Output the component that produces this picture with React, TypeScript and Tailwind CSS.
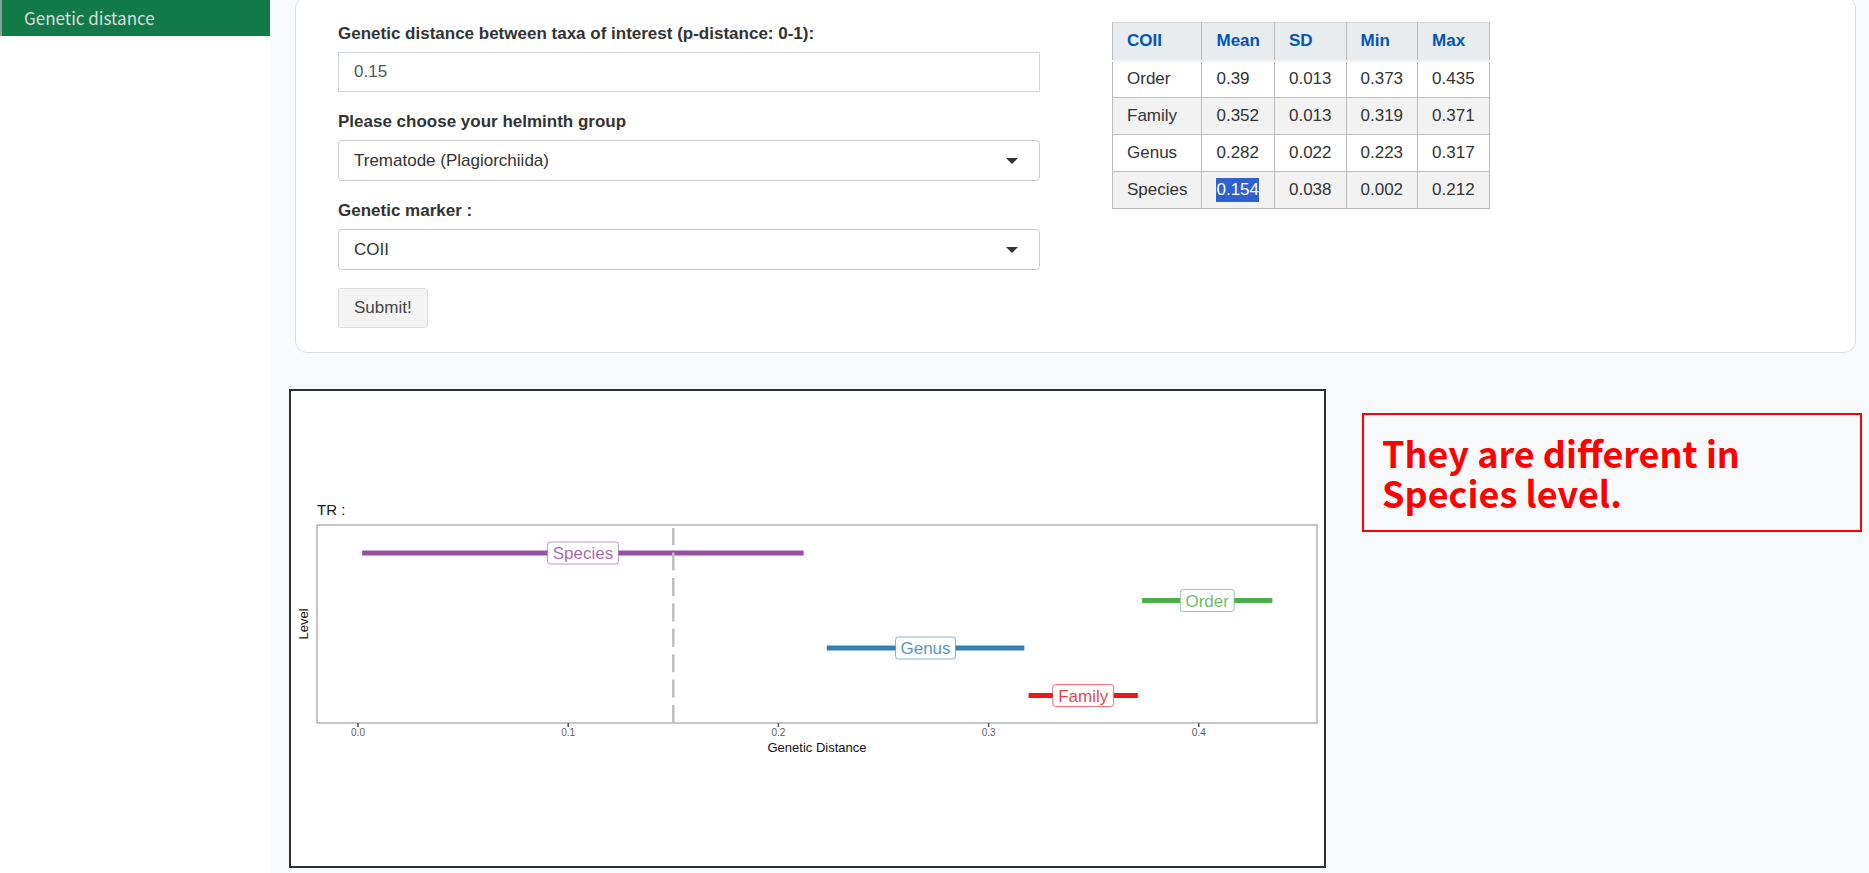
import React from "react";

const columns = ["COII", "Mean", "SD", "Min", "Max"];

const rows = [
  ["Order", "0.39", "0.013", "0.373", "0.435"],
  ["Family", "0.352", "0.013", "0.319", "0.371"],
  ["Genus", "0.282", "0.022", "0.223", "0.317"],
  ["Species", "0.154", "0.038", "0.002", "0.212"],
];

const ranges = [
  { name: "Species", min: 0.002, max: 0.212, y: 162, width: 71, color: "#984ea3" },
  { name: "Order", min: 0.373, max: 0.435, y: 209.5, width: 54, color: "#4daf4a" },
  { name: "Genus", min: 0.223, max: 0.317, y: 257, width: 60, color: "#377eb8" },
  { name: "Family", min: 0.319, max: 0.371, y: 304.5, width: 61, color: "#e41a1c" },
];

const ticks = [0, 0.1, 0.2, 0.3, 0.4];

const toX = (distance: number) => 67 + distance * 2102;

function Chart() {
  return (
    <svg
      viewBox="0 0 1033 475"
      className="block h-auto w-full font-['Liberation_Sans',Arial,sans-serif]"
      role="img"
      aria-label="Genetic distance range by level"
    >
      <text x="26" y="124" fontSize="15" fill="#1a1a1a">TR :</text>
      {ranges.map((r) => (
        <line key={r.name} x1={toX(r.min)} x2={toX(r.max)} y1={r.y} y2={r.y} stroke={r.color} strokeWidth="5" />
      ))}
      {ranges.map((r) => {
        const mid = toX((r.min + r.max) / 2);
        return (
          <g key={r.name}>
            <rect x={mid - r.width / 2} y={r.y - 11} width={r.width} height="22" rx="3" fill="#fff" stroke={r.color} strokeOpacity="0.6" />
            <text x={mid} y={r.y + 6} fontSize="17" textAnchor="middle" fill={r.color} fillOpacity="0.85">{r.name}</text>
          </g>
        );
      })}
      <line x1={toX(0.15)} x2={toX(0.15)} y1="332" y2="137" stroke="#bebebe" strokeWidth="2.5" strokeDasharray="18 7.4" />
      <rect x="26" y="134" width="1000" height="198" fill="none" stroke="#b3b3b3" strokeWidth="1.5" />
      {ticks.map((t) => (
        <g key={t}>
          <line x1={toX(t)} x2={toX(t)} y1="332" y2="336" stroke="#555" strokeWidth="1.5" />
          <text x={toX(t)} y="345" fontSize="10" textAnchor="middle" fill="#5c5c5c">{t.toFixed(1)}</text>
        </g>
      ))}
      <text x="526" y="361" fontSize="13" textAnchor="middle" fill="#111">Genetic Distance</text>
      <text transform="translate(17 233) rotate(-90)" fontSize="13" textAnchor="middle" fill="#111">Level</text>
    </svg>
  );
}

function SelectField({ id, label, value }: { id: string; label: string; value: string }) {
  return (
    <div>
      <label htmlFor={id} className="mb-1.5 block font-bold leading-6">{label}</label>
      <div className="grid items-center">
        <select
          id={id}
          defaultValue={value}
          className="col-start-1 row-start-1 h-[41px] w-full appearance-none rounded-[4px] border border-[#ccc] bg-white px-[15px]"
        >
          <option>{value}</option>
        </select>
        <svg viewBox="0 0 12 6" className="pointer-events-none col-start-1 row-start-1 mr-[22px] h-1.5 w-3 justify-self-end" aria-hidden="true">
          <path d="M0 0h12L6 6z" fill="#333" />
        </svg>
      </div>
    </div>
  );
}

export default function App() {
  return (
    <div className="flex min-h-screen bg-[#f8f9fb] font-['Liberation_Sans',Arial,sans-serif] text-[17px] text-[#333]">
      <nav className="w-[271px] shrink-0 bg-white pr-px">
        <a
          href="#genetic-distance"
          className="block h-9 border-l-2 border-[#999] bg-[#127a48] pl-[22px] font-['Noto_Sans_CJK_SC',sans-serif] text-[17px] leading-9 text-[#d8dedb]"
        >
          Genetic distance
        </a>
      </nav>
      <main className="min-w-0 flex-1 overflow-hidden pl-[18px] pr-[7px]">
        <section className="-mt-1 ml-1.5 mr-1.5 flex gap-[72px] rounded-xl border border-[#dcdfe2] bg-white pb-6 pl-[42px] pr-10 pt-[25px]">
          <form className="flex w-[702px] flex-col gap-[18px]" onSubmit={(e) => e.preventDefault()}>
            <div>
              <label htmlFor="distance" className="mb-1.5 block font-bold leading-6">
                Genetic distance between taxa of interest (p-distance: 0-1):
              </label>
              <input
                id="distance"
                type="text"
                defaultValue="0.15"
                className="block h-10 w-full border border-[#d0d4dd] bg-white px-[15px] text-[#555]"
              />
            </div>
            <SelectField id="group" label="Please choose your helminth group" value="Trematode (Plagiorchiida)" />
            <SelectField id="marker" label="Genetic marker :" value="COII" />
            <button type="submit" className="h-10 self-start rounded-[3px] border border-[#ddd] bg-[#f4f4f4] px-[15px] text-[#444]">
              Submit!
            </button>
          </form>
          <table className="border-collapse self-start">
            <thead>
              <tr className="h-[38px] bg-[#e9ecef] text-left text-[#0056b3]">
                {columns.map((c) => (
                  <th key={c} className="border border-b-2 border-[#bbb] border-b-[#f2f2f2] border-t-[#d8d8d8] px-3.5 font-bold leading-6">{c}</th>
                ))}
              </tr>
            </thead>
            <tbody>
              {rows.map((row) => (
                <tr key={row[0]} className="h-[37px] even:bg-[#f2f2f2]">
                  {row.map((cell, i) => (
                    <td key={i} className="border border-[#bbb] px-3.5 leading-6">
                      {cell === "0.154" ? <mark className="inline-block bg-[#3062cf] text-white">{cell}</mark> : cell}
                    </td>
                  ))}
                </tr>
              ))}
            </tbody>
          </table>
        </section>
        <section className="mt-9 grid grid-cols-[minmax(0,1037fr)_minmax(0,500fr)] items-start gap-9">
          <div className="border-2 border-[#2d2f33] bg-white">
            <Chart />
          </div>
          <h2 className="mt-6 border-2 border-[#f00] px-[18px] pb-[18px] pt-[17px] font-['Noto_Sans_CJK_SC',sans-serif] text-4xl font-bold leading-10 text-[#f00]">
            They are different in Species level.
          </h2>
        </section>
      </main>
    </div>
  );
}
